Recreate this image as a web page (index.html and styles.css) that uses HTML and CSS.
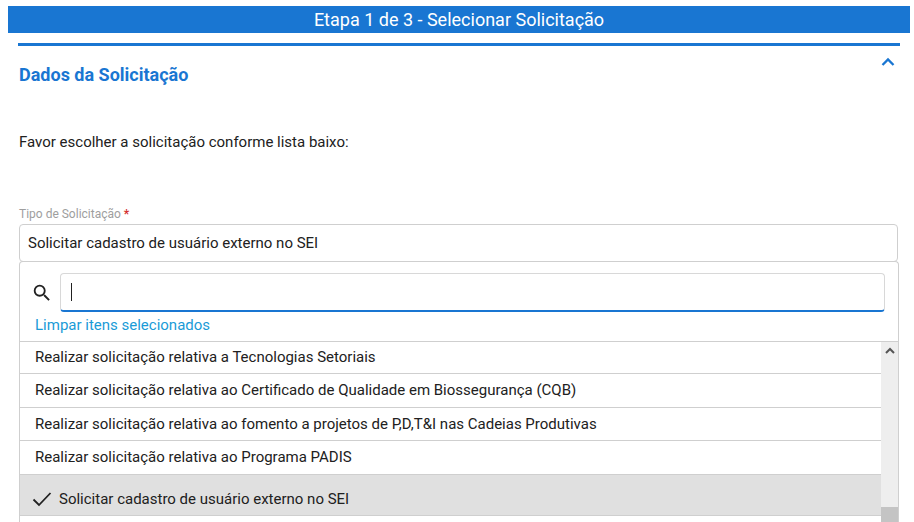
FILE: index.html
```html
<!DOCTYPE html>
<html lang="pt-BR">
  <head>
    <meta charset="UTF-8" />
    <meta name="viewport" content="width=device-width, initial-scale=1.0" />
    <title>Etapa 1 de 3 - Selecionar Solicitação</title>
    <link rel="stylesheet" href="styles.css">
  </head>
  <body>
    <div class="step-bar">Etapa 1 de 3 - Selecionar Solicitação</div>
    <div class="section">
      <div class="section-head">
        <h2>Dados da Solicitação</h2>
        <svg class="collapse-icon" viewBox="0 0 14 9" width="14" height="9">
          <path d="M1.5 8 L7 2.5 L12.5 8" fill="none" stroke="#1976d2" stroke-width="2.3" />
        </svg>
      </div>
      <p class="intro">Favor escolher a solicitação conforme lista baixo:</p>
      <label class="field-label">Tipo de Solicitação <span class="required">*</span></label>
      <div class="select-box">Solicitar cadastro de usuário externo no SEI</div>
      <div class="dropdown">
        <div class="search-row">
          <svg class="search-icon" viewBox="0 0 24 24" width="22" height="22">
            <path d="M15.5 14h-.79l-.28-.27A6.47 6.47 0 0 0 16 9.5 6.5 6.5 0 1 0 9.5 16c1.61 0 3.09-.59 4.23-1.57l.27.28v.79l5 4.99L20.49 19l-4.99-5zm-6 0C7.01 14 5 11.99 5 9.5S7.01 5 9.5 5 14 7.01 14 9.5 11.99 14 9.5 14z" fill="#212121" />
          </svg>
          <div class="search-input"><span class="caret"></span></div>
        </div>
        <a class="clear-link">Limpar itens selecionados</a>
        <div class="list-wrap">
          <ul class="options">
            <li class="h1">Realizar solicitação relativa a Tecnologias Setoriais</li>
            <li class="h2">Realizar solicitação relativa ao Certificado de Qualidade em Biossegurança (CQB)</li>
            <li class="h3">Realizar solicitação relativa ao fomento a projetos de P,D,T&amp;I nas Cadeias Produtivas</li>
            <li class="h4">Realizar solicitação relativa ao Programa PADIS</li>
            <li class="selected">
              <svg class="check-icon" viewBox="0 0 20 16" width="20" height="16">
                <path d="M1.5 8.5 L7 14 L18.5 2" fill="none" stroke="#212121" stroke-width="1.8" />
              </svg>
              Solicitar cadastro de usuário externo no SEI
            </li>
            <li class="h4"></li>
          </ul>
          <div class="scrollbar">
            <svg viewBox="0 0 10 7" width="10" height="7">
              <path d="M1 6 L5 2 L9 6" fill="none" stroke="#555" stroke-width="2" />
            </svg>
            <div class="thumb"></div>
          </div>
        </div>
      </div>
    </div>
  </body>
</html>
```

FILE: styles.css
```css
html,
body {
  height: 522px;
  overflow: hidden;
}
body {
  margin: 0;
  padding: 6px 4px 0 8px;
  box-sizing: border-box;
  font-family: Roboto, "Liberation Sans", sans-serif;
  font-size: 15px;
  color: #212121;
  background-color: white;
}
.step-bar {
  height: 27px;
  line-height: 27px;
  background-color: #1976d2;
  color: white;
  font-size: 18px;
  text-align: center;
}
.section {
  margin: 10px 10px 0 10px;
  border-top: 3px solid #1976d2;
  padding-left: 1px;
}
.section-head {
  display: flex;
  justify-content: space-between;
  height: 56px;
}
.section-head h2 {
  margin: 17px 0 0 0;
  font-size: 18px;
  line-height: 24px;
  font-weight: 700;
  color: #1976d2;
}
.collapse-icon {
  margin: 11px 5px 0 0;
}
.intro {
  margin: 20px 0 0 0;
  line-height: 40px;
}
.field-label {
  display: block;
  margin-top: 46px;
  height: 16px;
  line-height: 12px;
  font-size: 12px;
  color: #9e9e9e;
}
.required {
  color: #d32f2f;
  font-weight: 700;
}
.select-box {
  box-sizing: border-box;
  width: 879px;
  height: 38px;
  line-height: 36px;
  padding-left: 8px;
  border: 1px solid #cfcfcf;
  border-radius: 4px;
}
.dropdown {
  box-sizing: border-box;
  width: 880px;
  margin-top: -1px;
  border: 1px solid #cfcfcf;
  border-bottom: none;
  border-radius: 4px 4px 0 0;
}
.search-row {
  display: flex;
  align-items: center;
  padding: 11px 13px 0 11px;
}
.search-icon {
  margin-right: 7px;
  flex: none;
}
.search-input {
  flex: 1;
  display: flex;
  align-items: center;
  box-sizing: border-box;
  height: 39px;
  padding-left: 10px;
  border: 1px solid #d8d8d8;
  border-bottom: 2px solid #1976d2;
  border-radius: 4px;
}
.caret {
  width: 1px;
  height: 18px;
  background-color: #212121;
}
.clear-link {
  display: block;
  height: 29px;
  line-height: 26px;
  padding-left: 15px;
  color: #1a9bd7;
}
.list-wrap {
  display: flex;
  height: 181px;
  overflow: hidden;
  border-top: 1px solid #cfcfcf;
}
.options {
  flex: 1;
  margin: 0;
  padding: 0;
  list-style: none;
}
.options li {
  box-sizing: border-box;
  display: flex;
  align-items: center;
  padding-left: 15px;
  border-bottom: 1px solid #cfcfcf;
}
.options .h1 {
  height: 32px;
  padding-bottom: 2px;
}
.options .h2 {
  height: 34px;
  padding-bottom: 2px;
}
.options .h3 {
  height: 33px;
}
.options .h4 {
  height: 34px;
  padding-bottom: 2px;
}
.options .selected {
  height: 41px;
  padding-left: 12px;
  padding-top: 8px;
  background-color: #e0e0e0;
}
.check-icon {
  margin-right: 7px;
}
.scrollbar {
  position: relative;
  flex: none;
  width: 17px;
  background-color: #eeeeee;
  text-align: center;
}
.scrollbar svg {
  display: block;
  margin: 5px auto 0 auto;
}
.thumb {
  position: absolute;
  left: 0;
  right: 0;
  top: 165px;
  height: 40px;
  background-color: #c4c4c4;
}
```
